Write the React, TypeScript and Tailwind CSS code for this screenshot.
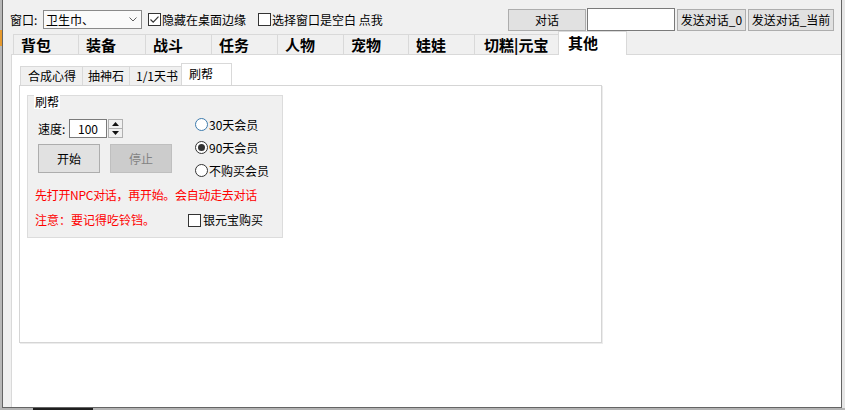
import React from "react";

const mainTabs = [
  { label: "背包", cls: "w-[65px]" },
  { label: "装备", cls: "w-[67px]" },
  { label: "战斗", cls: "w-[66px]" },
  { label: "任务", cls: "w-[66px]" },
  { label: "人物", cls: "w-[66px]" },
  { label: "宠物", cls: "w-[65px]" },
  { label: "娃娃", cls: "w-[66px]" },
  { label: "切糕|元宝", cls: "w-[84px] pl-[9px]" },
];

const subTabs = [
  { label: "合成心得", cls: "w-[62px] pl-[7px]" },
  { label: "抽神石", cls: "w-[47px] pl-[5px]" },
  { label: "1/1天书", cls: "w-[52px] pl-[6px]" },
];

function CheckBox({ checked }: { checked?: boolean }) {
  return (
    <span className="w-[13px] h-[13px] border border-[#333333] bg-white flex items-center justify-center shrink-0">
      {checked && (
        <svg width="11" height="11" viewBox="0 0 11 11">
          <path d="M1.5 5.5 L4.2 8.2 L9.5 2.6" stroke="#333333" strokeWidth="1.2" fill="none" />
        </svg>
      )}
    </span>
  );
}

function Radio({ checked, focus }: { checked?: boolean; focus?: boolean }) {
  return (
    <span
      className={
        focus
          ? "w-[13px] h-[13px] rounded-full border border-[#3d7bad] bg-white flex items-center justify-center shrink-0"
          : "w-[13px] h-[13px] rounded-full border border-[#333333] bg-white flex items-center justify-center shrink-0"
      }
    >
      {checked && <span className="w-[7px] h-[7px] rounded-full bg-[#333333]" />}
    </span>
  );
}

function Btn({ children, cls }: { children: React.ReactNode; cls: string }) {
  return (
    <div className={`${cls} bg-[#e1e1e1] border border-[#adadad] flex items-center justify-center text-[12px] text-black`}>
      {children}
    </div>
  );
}

export default function App() {
  return (
    <div className="w-[845px] h-[410px] flex flex-col bg-[#b4b4b4] overflow-hidden font-['Noto_Sans_CJK_SC','Liberation_Sans',sans-serif] text-[12px] text-black">
      <div className="flex h-[408px]">
        {/* stuff behind the window on the left */}
        <div className="w-[2px] bg-[#b8b8b8] flex flex-col">
          <div className="h-[30px]" />
          <div className="h-[16px] bg-[#e69a2e]" />
        </div>

        <div className="flex-1 flex flex-col bg-[#f0f0f0] border-l border-r border-b border-[#646464]">
          {/* top toolbar */}
          <div className="flex items-center mt-[8px] h-[23px]">
            <span className="ml-[7px] w-[33px] leading-[16px]">窗口:</span>
            <div className="w-[99px] h-[19px] bg-[#fafafa] border border-[#8a8a8a] flex items-center pl-[2px] pr-[4px]">
              <span className="flex-1 leading-[16px]">卫生巾、</span>
              <svg width="8" height="5" viewBox="0 0 8 5">
                <path d="M0.5 0.5 L4 4 L7.5 0.5" stroke="#606060" strokeWidth="1" fill="none" />
              </svg>
            </div>
            <div className="ml-[6px] flex items-center gap-[1px]">
              <CheckBox checked />
              <span className="leading-[16px]">隐藏在桌面边缘</span>
            </div>
            <div className="ml-[12px] flex items-center gap-[1px]">
              <CheckBox />
              <span className="leading-[16px]">选择窗口是空白 点我</span>
            </div>
            <div className="ml-auto mr-[7px] flex items-end h-[23px]">
              <Btn cls="w-[78px] h-[22px]">对话</Btn>
              <div className="ml-[1px] w-[88px] h-[23px] bg-white border border-[#7a7a7a]" />
              <Btn cls="ml-[2px] w-[69px] h-[22px]">发送对话_0</Btn>
              <Btn cls="ml-[2px] w-[86px] h-[22px]">发送对话_当前</Btn>
            </div>
          </div>

          {/* main tab control */}
          <div className="ml-[8px] flex-1 flex flex-col">
            <div className="flex items-end h-[24px]">
              <div className="w-[2px] h-[21px] border-b border-[#d9d9d9]" />
              {mainTabs.map((t) => (
                <div
                  key={t.label}
                  className={`${t.cls} h-[21px] pt-[1px] pl-[7px] bg-[#f0f0f0] border-t border-l border-b border-[#d9d9d9] text-[15px] font-bold leading-[17px] whitespace-nowrap`}
                >
                  {t.label}
                </div>
              ))}
              <div className="w-[69px] h-[24px] pt-[2px] pl-[9px] bg-white border-t border-l border-r border-[#d9d9d9] text-[15px] font-bold leading-[17px]">
                其他
              </div>
              <div className="flex-1 h-[24px] border-b border-[#d9d9d9]" />
            </div>

            <div className="flex-1 bg-white border-l border-[#d9d9d9] pl-[7px] pt-[8px]">
              {/* inner tab control */}
              <div className="w-[583px] flex flex-col">
                <div className="flex items-end h-[22px] pl-[1px]">
                  {subTabs.map((t) => (
                    <div
                      key={t.label}
                      className={`${t.cls} h-[19px] pt-[1px] bg-[#f0f0f0] border-t border-l border-[#d9d9d9] leading-[16px] whitespace-nowrap`}
                    >
                      {t.label}
                    </div>
                  ))}
                  <div className="w-[51px] h-[22px] pt-[2px] pl-[7px] bg-white border-t border-l border-r border-[#d9d9d9] leading-[16px]">
                    刷帮
                  </div>
                </div>

                <div className="h-[258px] bg-white border border-[#d5d5d5] shadow-[1px_1px_0_#ececec] pl-[7px] pt-[9px]">
                  {/* group box */}
                  <div className="w-[256px] h-[143px] bg-[#f0f0f0] border border-[#dcdcdc] flex flex-col">
                    <span className="ml-[6px] -mt-px w-fit h-[14px] px-[1px] bg-white leading-[14px]">刷帮</span>

                    <div className="flex pl-[10px]">
                      <div className="w-[157px] flex flex-col">
                        <div className="mt-[10px] h-[19px] flex items-center">
                          <span className="w-[31px] leading-[16px]">速度:</span>
                          <div className="w-[38px] h-[19px] bg-white border border-[#7a7a7a] pl-[8px] leading-[17px]">100</div>
                          <div className="ml-[1px] w-[15px] h-[19px] border border-[#b0b0b0] bg-[#f0f0f0] flex flex-col">
                            <div className="flex-1 flex items-center justify-center border-b border-[#b0b0b0]">
                              <svg width="7" height="4" viewBox="0 0 7 4">
                                <path d="M0 4 L3.5 0 L7 4 Z" fill="#111111" />
                              </svg>
                            </div>
                            <div className="flex-1 flex items-center justify-center">
                              <svg width="7" height="4" viewBox="0 0 7 4">
                                <path d="M0 0 L3.5 4 L7 0 Z" fill="#111111" />
                              </svg>
                            </div>
                          </div>
                        </div>
                        <div className="mt-[6px] flex">
                          <Btn cls="w-[62px] h-[29px]">开始</Btn>
                          <div className="ml-[10px] w-[62px] h-[29px] bg-[#cccccc] border border-[#bfbfbf] flex items-center justify-center text-[#838383]">
                            停止
                          </div>
                        </div>
                      </div>

                      <div className="mt-[4px] flex flex-col">
                        <div className="h-[23px] flex items-center gap-[1px]">
                          <Radio focus />
                          <span className="leading-[16px]">30天会员</span>
                        </div>
                        <div className="h-[23px] flex items-center gap-[1px]">
                          <Radio checked />
                          <span className="leading-[16px]">90天会员</span>
                        </div>
                        <div className="h-[23px] flex items-center gap-[1px]">
                          <Radio />
                          <span className="leading-[16px]">不购买会员</span>
                        </div>
                      </div>
                    </div>

                    <div className="ml-[7px] mt-[5px] h-[16px] leading-[16px] text-[#ff0000] whitespace-nowrap tracking-[-0.3px]">
                      先打开NPC对话，再开始。会自动走去对话
                    </div>
                    <div className="ml-[7px] mt-[9px] h-[16px] flex items-center">
                      <span className="w-[153px] leading-[16px] text-[#ff0000] whitespace-nowrap">注意：要记得吃铃铛。</span>
                      <CheckBox />
                      <span className="ml-[2px] leading-[16px]">银元宝购买</span>
                    </div>
                  </div>
                </div>
              </div>
            </div>
          </div>
        </div>

        <div className="w-[3px] bg-[#e6e6e6]" />
      </div>
      <div className="h-[2px] flex">
        <div className="w-[33px] bg-[#b4b4b4]" />
        <div className="w-[60px] bg-[#1e1e1e]" />
        <div className="flex-1 bg-[#b4b4b4]" />
      </div>
    </div>
  );
}
